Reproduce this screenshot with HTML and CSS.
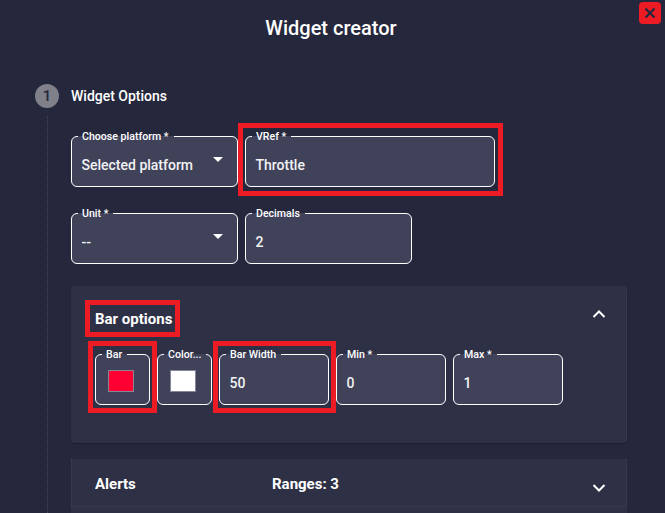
FILE: index.html
```html
<!DOCTYPE html>
<html lang="en">
<head>
<meta charset="utf-8">
<title>Widget creator</title>
<link rel="stylesheet" href="styles.css">
</head>
<body>
<main class="dialog">
  <button class="close" aria-label="Close">
    <svg viewBox="0 0 24 24" width="18" height="18"><path d="M6 6l12 12M18 6L6 18" fill="none" stroke="#25273c" stroke-width="3"/></svg>
  </button>
  <h1 class="title">Widget creator</h1>
  <div class="step-head">
    <span class="step-num">1</span>
    <span class="step-name">Widget Options</span>
  </div>
  <div class="step-body">
    <div class="row">
      <fieldset class="field w167"><legend>Choose platform *</legend>
        <div class="value select">Selected platform<span class="caret"></span></div></fieldset>
      <div class="marked">
        <fieldset class="field w250"><legend>VRef *</legend><div class="value">Throttle</div></fieldset>
        <span class="mark mark-vref"></span>
      </div>
    </div>
    <div class="row">
      <fieldset class="field w167"><legend>Unit *</legend>
        <div class="value select">--<span class="caret"></span></div></fieldset>
      <fieldset class="field w167"><legend>Decimals</legend><div class="value">2</div></fieldset>
    </div>
    <section class="panel panel-open">
      <div class="panel-head">
        <h2 class="panel-title">Bar options<span class="mark mark-title"></span></h2>
        <svg class="chev" viewBox="0 0 14 10" width="14" height="10"><path d="M1.5 8L7 2.5 12.5 8" fill="none" stroke="#fff" stroke-width="2"/></svg>
      </div>
      <div class="bar-row">
        <div class="marked">
          <fieldset class="field w55"><legend>Bar</legend><span class="swatch red"></span></fieldset>
          <span class="mark mark-bar"></span>
        </div>
        <fieldset class="field w55"><legend>Color...</legend><span class="swatch white"></span></fieldset>
        <div class="marked">
          <fieldset class="field w110"><legend>Bar Width</legend><div class="value">50</div></fieldset>
          <span class="mark mark-width"></span>
        </div>
        <fieldset class="field w110"><legend>Min *</legend><div class="value">0</div></fieldset>
        <fieldset class="field w110"><legend>Max *</legend><div class="value">1</div></fieldset>
      </div>
    </section>
    <section class="panel panel-closed">
      <h2 class="panel-title alerts">Alerts</h2>
      <span class="ranges">Ranges: 3</span>
      <svg class="chev chev-down" viewBox="0 0 14 10" width="14" height="10"><path d="M1.5 2L7 7.5 12.5 2" fill="none" stroke="#fff" stroke-width="2"/></svg>
    </section>
    <div class="panel panel-rest"></div>
  </div>
</main>
</body>
</html>
```
FILE: styles.css
```css
* { box-sizing: border-box; }
html, body { margin: 0; height: 100%; overflow: hidden; }
body { background: #25273c; color: #fff; font-family: Roboto, "Liberation Sans", sans-serif; }
.dialog { position: relative; height: 513px; padding-top: 15px; }
.title { margin: 0; font-size: 20px; font-weight: 500; line-height: 26px; text-align: center; padding-right: 3px; }
.close { position: absolute; top: 2px; right: 4px; width: 22px; height: 22px; padding: 0; border: 0; border-radius: 4px; background: #ed1c24; display: flex; align-items: center; justify-content: center; }
.step-head { display: flex; align-items: center; gap: 12px; margin: 43px 0 0 35px; height: 24px; }
.step-num { width: 24px; height: 24px; border-radius: 50%; background: #7f808a; color: #25273c; font-size: 15px; font-weight: 500; display: flex; align-items: center; justify-content: center; }
.step-name { font-size: 14px; font-weight: 500; line-height: 22px; }
.step-body { margin: 8px 0 0 47px; padding: 20px 37px 0 23px; border-left: 1px dotted #45475b; }
.row { display: flex; gap: 7px; margin-bottom: 26px; }
.marked { position: relative; display: flex; }
.field { margin: 0; padding: 0; height: 51px; min-width: 0; border: 1px solid #fff; border-radius: 6px; background: #40425a; display: block; flex: none; }
.field legend { margin-left: 6px; padding: 0 5px 0 4px; height: 0; line-height: 0; font-size: 10.6px; font-weight: 500; white-space: nowrap; color: #fff; }
.w167 { width: 167px; }
.w250 { width: 250px; }
.w110 { width: 110px; }
.w55 { width: 55px; }
.value { position: relative; padding: 19px 0 0 9.5px; font-size: 14px; font-weight: 500; line-height: 18px; color: #f2f2f4; }
.caret { position: absolute; right: 14px; top: 20px; width: 0; height: 0; border-left: 5px solid transparent; border-right: 5px solid transparent; border-top: 5px solid #fff; }
.panel { background: #2e3045; width: 556px; }
.panel-open { height: 157px; margin-top: -4px; border-radius: 4px; padding: 14px 24px 0; box-shadow: 0 1px 1px #1c1d2e; border-right: 1px dotted #3f4158; }
.panel-head { display: flex; justify-content: space-between; align-items: flex-start; height: 54px; }
.panel-title { position: relative; margin: 9px 0 0; font-size: 15px; font-weight: 700; line-height: 20px; }
.chev { margin: 9px -4px 0 0; }
.bar-row { display: flex; gap: 7px; }
.swatch { display: block; width: 26px; height: 22px; margin: 15px 0 0 12px; border: 1px solid #85869a; }
.red { background: #ff0033; }
.white { background: #fff; }
.panel-closed { position: relative; display: flex; align-items: center; height: 48px; margin-top: 16px; padding: 2px 24px 0 23px; border: 1px dotted #3f4158; border-width: 0 1px 1px; }
.alerts { margin: 0; width: 177px; }
.ranges { font-size: 15px; font-weight: 700; }
.chev-down { margin: 8px -4px 0 auto; }
.panel-rest { height: 10px; }
.mark { position: absolute; border: 5px solid #ed1c24; pointer-events: none; }
.mark-vref { left: -7px; right: -8px; top: -13px; bottom: -9px; }
.mark-title { left: -10px; right: -8px; top: -9px; bottom: -8px; }
.mark-bar { left: -7px; right: -7px; top: -13px; bottom: -8px; }
.mark-width { left: -6px; right: -7px; top: -13px; bottom: -8px; }
```
